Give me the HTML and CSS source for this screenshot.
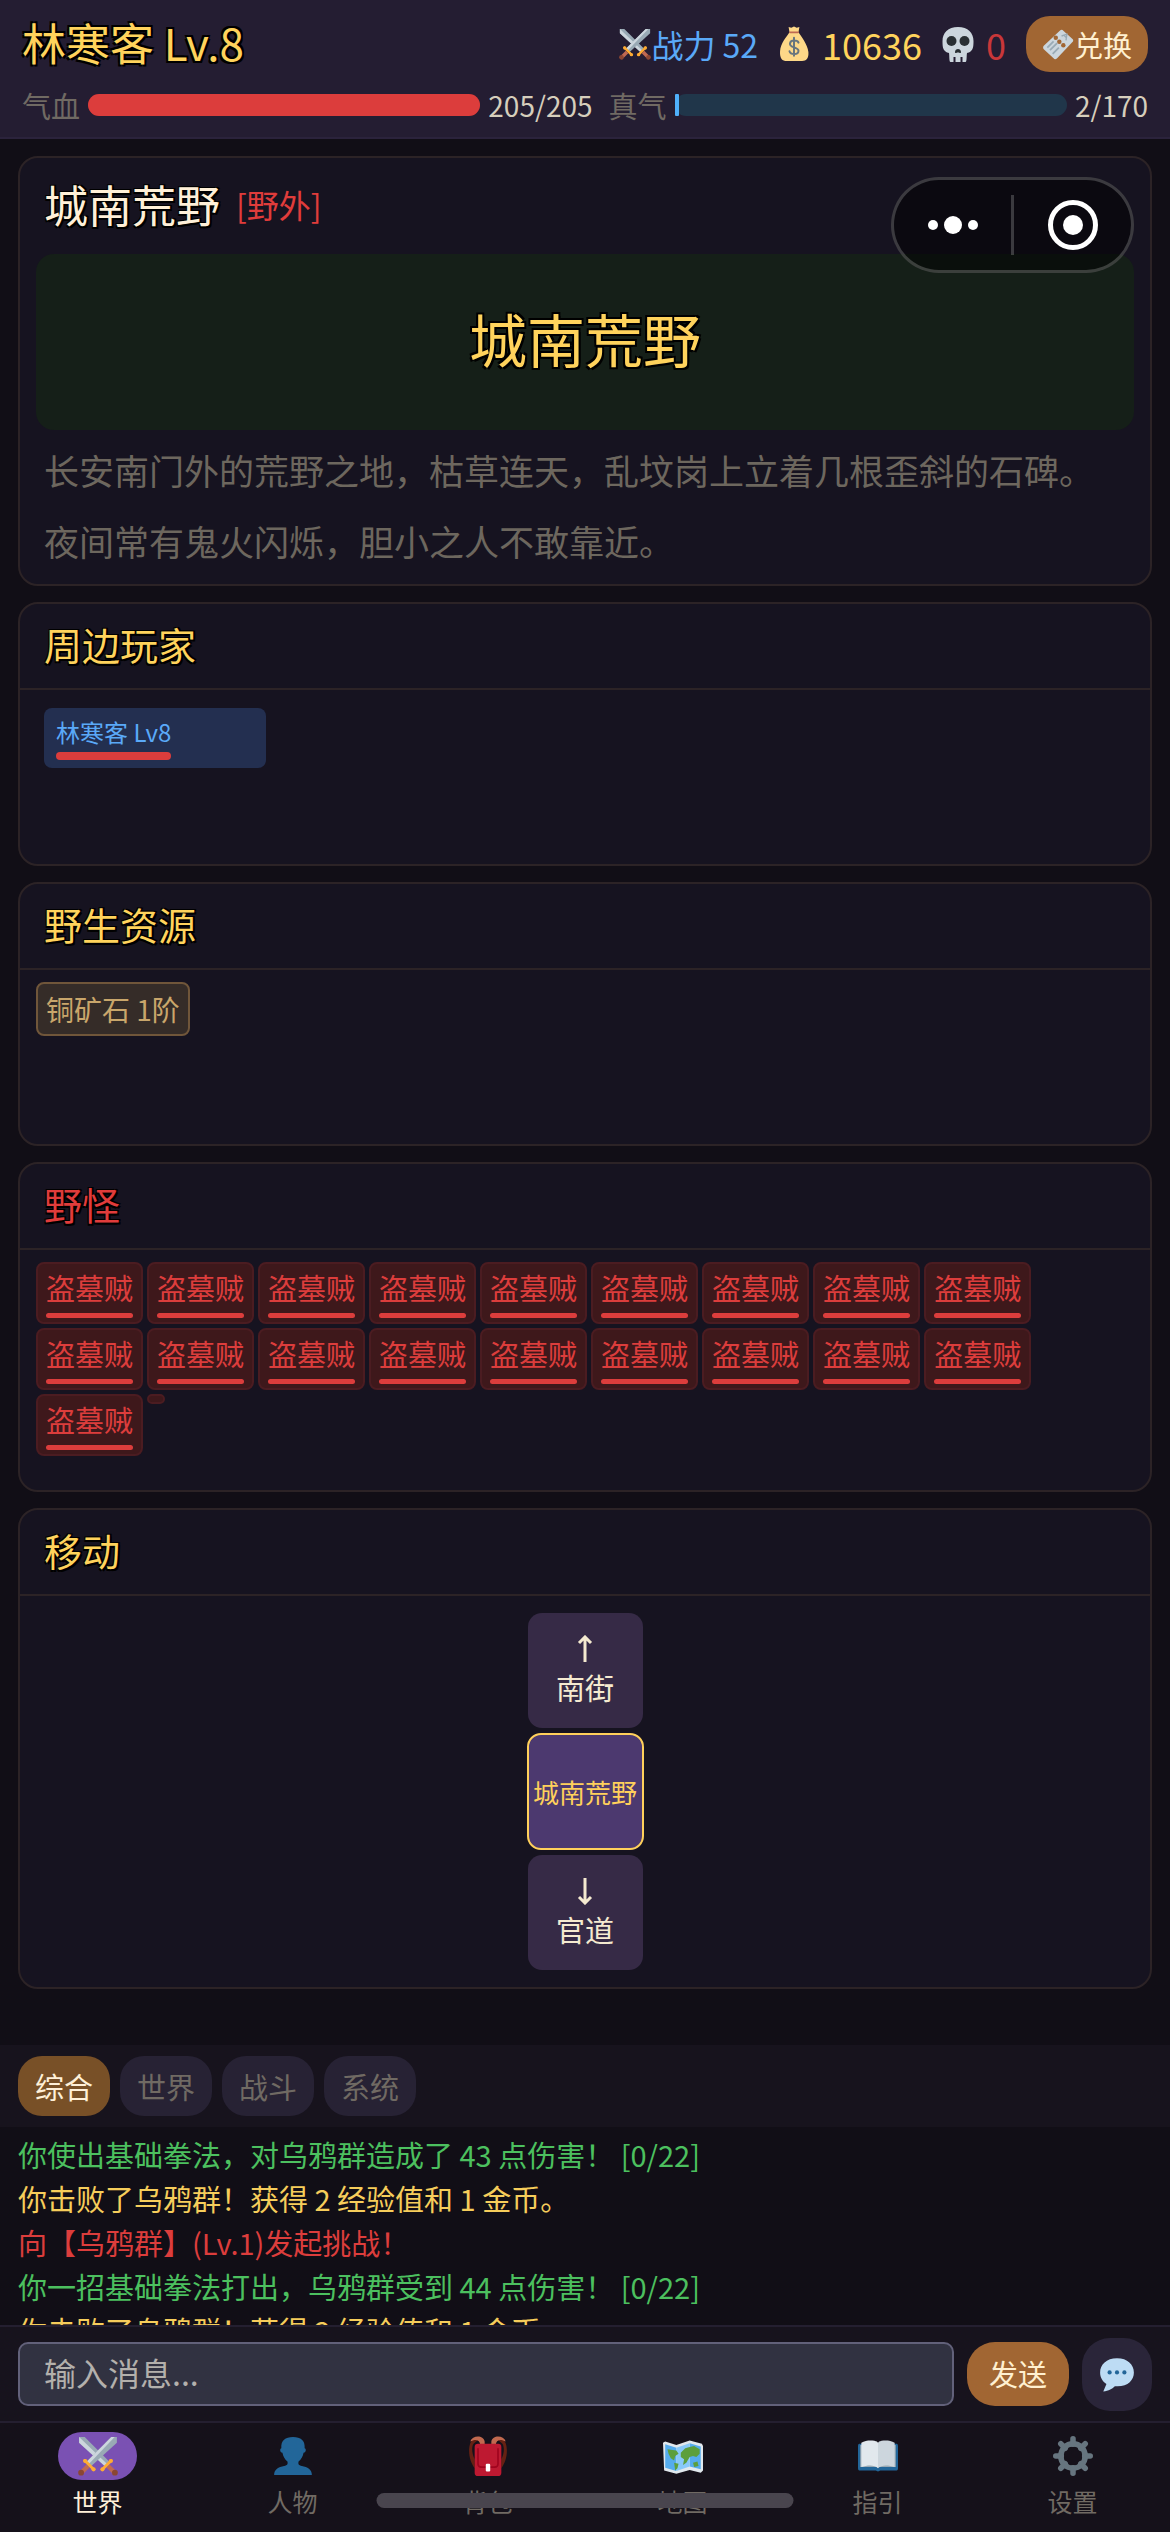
FILE: index.html
```html
<!DOCTYPE html>
<html lang="zh-CN">
<head>
    <meta charset="UTF-8">
    <meta name="viewport" content="width=device-width, initial-scale=1.0">
    <title>城南荒野</title>
    <link rel="stylesheet" href="styles.css">
</head>
<body>
    <!-- shared icons -->
    <svg class="sprite" aria-hidden="true">
        <symbol id="swords" viewBox="0 0 36 36">
            <path d="M1 1h5l22 22-4 4L1 6z" fill="#99aab5"/>
            <path d="M1 1l25 24-2 2L1 6z" fill="#ccd6dd"/>
            <path d="M35 1h-5L8 23l4 4L35 6z" fill="#99aab5"/>
            <path d="M30 1h3L10 25l-2-2z" fill="#ccd6dd"/>
            <path d="M9 27l-7 7M27 27l7 7" stroke="#bf6952" stroke-width="4"/>
            <circle cx="2.8" cy="33" r="2.6" fill="#8a4633"/>
            <circle cx="33.2" cy="33" r="2.6" fill="#8a4633"/>
            <path d="M6 22l8 8M30 22l-8 8" stroke="#ffac33" stroke-width="2.6" stroke-linecap="round"/>
            <circle cx="6.5" cy="22.5" r="1.9" fill="#ffac33"/><circle cx="14" cy="30" r="1.9" fill="#ffac33"/>
            <circle cx="29.5" cy="22.5" r="1.9" fill="#ffac33"/><circle cx="22" cy="30" r="1.9" fill="#ffac33"/>
        </symbol>
    </svg>

    <header class="topbar">
        <div class="topbar-row">
            <h1 class="player-name">林寒客 Lv.8</h1>
            <div class="currency">
                <span class="power"><svg class="icon-s"><use href="#swords"/></svg>战力 52</span>
                <span class="gold">
                    <svg class="icon-m" viewBox="0 0 32 40">
                        <path d="M10 1l3 1 3-1.500L19 2l3-1-1 6H11z" fill="#fdd888"/>
                        <path d="M11 7C8 12 1 19 .5 28 0 36 3 39 8 39h17c5 0 7.500-3 7-10C31 20 24 12 21 7z" fill="#fdd888"/>
                        <path d="M11.500 7h9" stroke="#bf6952" stroke-width="2" stroke-linecap="round"/>
                        <path d="M21 18.500C20 15.500 12 15 11.500 19.500c-.5 5 9.500 3.500 9.500 8 0 5-9 4.500-10 .5M16 13v20" fill="none" stroke="#67757f" stroke-width="2.200" stroke-linecap="round"/>
                    </svg>
                    10636
                </span>
                <span class="kills">
                    <svg class="icon-m" viewBox="0 0 32 36">
                        <path d="M16 1C6 1 .5 7 .5 15c0 6 .5 8 2.500 10 1.500 1.500 3 1.500 4 2 .5 2 0 9 1.500 9h15c1.500 0 1-7 1.500-9 1-.5 2.500-.5 4-2 2-2 2.500-4 2.500-10C31.500 7 26 1 16 1z" fill="#ccd6dd"/>
                        <circle cx="9.500" cy="15" r="5" fill="#292f33"/>
                        <circle cx="22.500" cy="15" r="5" fill="#292f33"/>
                        <path d="M13 26c0-2 1.500-3 3-3s3 1 3 3-1.500.5-3 .5-3 1.500-3-.5z" fill="#292f33"/>
                        <path d="M12.500 31v5M19.500 31v5" stroke="#241d32" stroke-width="2"/>
                    </svg>
                    0
                </span>
                <button class="redeem" type="button">
                    <svg class="icon-s" viewBox="0 0 36 36">
                        <path d="M20 3c1.500-1.500 3-1.500 4 0l10 9c1.500 1 1.500 3 0 4L17 34c-1.500 1.500-3 1.500-4 0L2 24c-1-1-1-3 0-4z" fill="#ccd6dd"/>
                        <path d="M6 22l7-7M9 25l8-8M12 29l7-7" stroke="#99aab5" stroke-width="2"/>
                        <circle cx="15.500" cy="11" r="2.500" fill="#a16633"/><circle cx="19.500" cy="15.500" r="2.500" fill="#a16633"/><circle cx="24" cy="19.500" r="2.500" fill="#a16633"/>
                        <path d="M22 9l6-2-1 7M24.500 8l3 3" stroke="#99aab5" stroke-width="1.500" fill="none"/>
                    </svg>兑换
                </button>
            </div>
        </div>
        <div class="topbar-row vitals">
            <span class="vital-label">气血</span>
            <div class="gauge gauge-hp"><div class="gauge-fill" style="width:100%"></div></div>
            <span class="vital-value">205/205</span>
            <span class="vital-label mp-label">真气</span>
            <div class="gauge gauge-mp"><div class="gauge-fill" style="width:1.18%"></div></div>
            <span class="vital-value">2/170</span>
        </div>
    </header>

    <div class="capsule">
        <button type="button" aria-label="更多">
            <svg width="60" height="60" viewBox="0 0 60 60" fill="#fff"><circle cx="10" cy="30" r="5"/><circle cx="30" cy="30" r="9"/><circle cx="50" cy="30" r="5"/></svg>
        </button>
        <span class="capsule-line"></span>
        <button type="button" aria-label="关闭">
            <svg width="60" height="60" viewBox="0 0 60 60"><circle cx="30" cy="30" r="22.500" fill="none" stroke="#fff" stroke-width="5"/><circle cx="30" cy="30" r="10" fill="#fff"/></svg>
        </button>
    </div>

    <main class="world">
        <section class="card place">
            <div class="place-head">
                <h2 class="place-name">城南荒野</h2>
                <span class="place-type">[野外]</span>
            </div>
            <div class="banner">城南荒野</div>
            <p class="place-desc">长安南门外的荒野之地，枯草连天，乱坟岗上立着几根歪斜的石碑。夜间常有鬼火闪烁，胆小之人不敢靠近。</p>
        </section>

        <section class="card">
            <h2 class="card-title">周边玩家</h2>
            <div class="card-body players">
                <div class="player">
                    <span>林寒客 Lv8</span>
                    <div class="player-hp"></div>
                </div>
            </div>
        </section>

        <section class="card">
            <h2 class="card-title">野生资源</h2>
            <div class="card-body">
                <button class="ore" type="button">铜矿石 1阶</button>
            </div>
        </section>

        <section class="card">
            <h2 class="card-title danger">野怪</h2>
            <div class="card-body mobs">
                <button class="mob" type="button">盗墓贼</button>
                <button class="mob" type="button">盗墓贼</button>
                <button class="mob" type="button">盗墓贼</button>
                <button class="mob" type="button">盗墓贼</button>
                <button class="mob" type="button">盗墓贼</button>
                <button class="mob" type="button">盗墓贼</button>
                <button class="mob" type="button">盗墓贼</button>
                <button class="mob" type="button">盗墓贼</button>
                <button class="mob" type="button">盗墓贼</button>
                <button class="mob" type="button">盗墓贼</button>
                <button class="mob" type="button">盗墓贼</button>
                <button class="mob" type="button">盗墓贼</button>
                <button class="mob" type="button">盗墓贼</button>
                <button class="mob" type="button">盗墓贼</button>
                <button class="mob" type="button">盗墓贼</button>
                <button class="mob" type="button">盗墓贼</button>
                <button class="mob" type="button">盗墓贼</button>
                <button class="mob" type="button">盗墓贼</button>
                <button class="mob" type="button">盗墓贼</button>
                <span class="mob mob-empty"></span>
            </div>
        </section>

        <section class="card">
            <h2 class="card-title">移动</h2>
            <div class="card-body moves">
                <button class="move" type="button">
                    <svg class="arrow" viewBox="0 0 28 28"><path d="M14 27V2M8 8l6-6 6 6"/></svg>
                    南街
                </button>
                <div class="move current">城南荒野</div>
                <button class="move" type="button">
                    <svg class="arrow" viewBox="0 0 28 28"><path d="M14 1v25M8 20l6 6 6-6"/></svg>
                    官道
                </button>
            </div>
        </section>
    </main>

    <section class="chat">
        <div class="tabs">
            <button class="tab active" type="button">综合</button>
            <button class="tab" type="button">世界</button>
            <button class="tab" type="button">战斗</button>
            <button class="tab" type="button">系统</button>
        </div>
        <div class="log">
            <p class="hit">你使出基础拳法，对乌鸦群造成了 43 点伤害！ [0/22]</p>
            <p class="loot">你击败了乌鸦群！获得 2 经验值和 1 金币。</p>
            <p class="fight">向【乌鸦群】(Lv.1)发起挑战！</p>
            <p class="hit">你一招基础拳法打出，乌鸦群受到 44 点伤害！ [0/22]</p>
            <p class="loot">你击败了乌鸦群！获得 2 经验值和 1 金币。</p>
        </div>
        <form class="send-row">
            <input class="message" type="text" placeholder="输入消息..." aria-label="输入消息">
            <button class="send" type="button">发送</button>
            <button class="bubble" type="button" aria-label="聊天">
                <svg class="icon-l" viewBox="0 0 36 36">
                    <path d="M18 3C8 3 2 9 2 16.500c0 5 2.500 8.500 6 11L5 34.500c5-.5 9-3 11-5 12 1 18-5.500 18-13C34 9 28 3 18 3z" fill="#bddcf4"/>
                    <circle cx="11" cy="16.500" r="2" fill="#226699"/><circle cx="18" cy="16.500" r="2" fill="#226699"/><circle cx="25" cy="16.500" r="2" fill="#226699"/>
                </svg>
            </button>
        </form>
    </section>

    <nav class="nav">
        <a class="nav-item active" href="#world">
            <span class="nav-icon"><svg class="icon-l"><use href="#swords"/></svg></span>
            世界
        </a>
        <a class="nav-item" href="#character">
            <span class="nav-icon">
                <svg class="icon-l" viewBox="0 0 36 36"><path d="M1 35c0-5 4-7 9-8 3-.6 3.500-1.500 3-4-2.500-2-4-5-4.500-8C6 15 6 11 7.500 11 7 4 11 1 18 1s11 3 10.500 10c1.500 0 1.500 4-1 4-.5 3-2 6-4.500 8-.5 2.500 0 3.400 3 4 5 1 9 3 9 8z" fill="#226699"/></svg>
            </span>
            人物
        </a>
        <a class="nav-item" href="#bag">
            <span class="nav-icon">
                <svg class="icon-l" viewBox="0 0 36 36">
                    <path d="M5 3C0 5-1 20 6 29V21C3 15 3 8 6 6l4-3zM31 3c5 2 6 17-1 26V21c3-6 3-13 0-15l-4-3z" fill="#662113"/>
                    <path d="M2 5C4-1 14-1 15 5v3h-4C11 4 7 2 2 5zM34 5C32-1 22-1 21 5v3h4c0-4 4-6 9-3z" fill="#c1694f"/>
                    <path d="M6 10c0-2 1-3 3-3h18c2 0 3 1 3 3v23c0 2-1 3-3 3H9c-2 0-3-1-3-3z" fill="#be1931"/>
                    <path d="M9 11v14c0 2 1 3 3 3h12c2 0 3-1 3-3V11" fill="none" stroke="#a0041e" stroke-width="1.500"/>
                    <rect x="16" y="25" width="4" height="7" rx="1" fill="#fff"/>
                </svg>
            </span>
            背包
        </a>
        <a class="nav-item" href="#map">
            <span class="nav-icon">
                <svg class="icon-l" viewBox="0 0 36 36">
                    <path d="M0 6l2-1 10 3 12-4 11 3 1 2v22l-2 2-10-2.500L12 34 1 31z" fill="#e1e8ed"/>
                    <path d="M2 7.500l10 3v21l-10-3zM24 6.500l10 3v20.500l-10-2.500z" fill="#55acee"/>
                    <path d="M12 10.500l12-4v21l-12 4z" fill="#88c9f9"/>
                    <path d="M4 12l8 1 2 3-3 2-1 4-3-2-2-4zM10 24l4 1-1 4-2 2zM16 15l4-4 4-1 4-1 5 3v4l-3 3-3-1-3 1-3 5-3 2 1-5-3-2zM27 24l4-1 1 4-4 1z" fill="#5c9f3c"/>
                </svg>
            </span>
            地图
        </a>
        <a class="nav-item" href="#guide">
            <span class="nav-icon">
                <svg class="icon-l" viewBox="0 0 36 36">
                    <path d="M0 9c0-2 1-2 2-2h32c1 0 2 0 2 2v20c0 2-1 2-2 2H20l-2 1-2-1H2c-1 0-2 0-2-2z" fill="#226699"/>
                    <path d="M2 8h32v20H2z" fill="#99aab5"/>
                    <path d="M3 6c5-3 12-2 14-1l1 1v23c-3-3-9-3-15-1z" fill="#e1e8ed"/>
                    <path d="M33 6c-5-3-12-2-14-1l-1 1v23c3-3 9-3 15-1z" fill="#ccd6dd"/>
                </svg>
            </span>
            指引
        </a>
        <a class="nav-item" href="#settings">
            <span class="nav-icon">
                <svg class="icon-l" viewBox="0 0 36 36">
                    <circle cx="18" cy="18" r="11" fill="none" stroke="#66757f" stroke-width="5"/>
                    <path d="M18 2.500v5M18 28.500v5M2.500 18h5M28.500 18h5M7 7l4 4M25 25l4 4M29 7l-4 4M7 29l4-4" stroke="#66757f" stroke-width="5" stroke-linecap="round"/>
                </svg>
            </span>
            设置
        </a>
        <span class="home-bar"></span>
    </nav>
</body>
</html>
```
FILE: styles.css
```css
* {
    box-sizing: border-box;
}

body {
    margin: 0;
    height: 100vh;
    display: flex;
    flex-direction: column;
    position: relative;
    overflow: hidden;
    background: #110e16;
    color: #f5ead0;
    font-family: "Noto Sans CJK SC", "Noto Sans", sans-serif;
    font-size: 29px;
    line-height: 44px;
}

h1, h2, p {
    margin: 0;
    font-weight: 400;
}

button {
    font: inherit;
    color: inherit;
    border: none;
    padding: 0;
    cursor: pointer;
}

a {
    color: inherit;
    text-decoration: none;
}

svg {
    display: block;
    flex: none;
}

.sprite {
    position: absolute;
    width: 0;
    height: 0;
}

.icon-s {
    width: 32px;
    height: 32px;
}

.icon-m {
    width: 32px;
    height: 36px;
}

.icon-l {
    width: 40px;
    height: 40px;
}

/* top bar */
.topbar {
    padding: 16px 22px 0;
    background: #241d32;
    border-bottom: 2px solid #2b233c;
}

.topbar-row {
    display: flex;
    align-items: center;
    justify-content: space-between;
}

.player-name {
    padding-bottom: 4px;
    font-size: 44px;
    line-height: 52px;
    color: #ffd35c;
    text-shadow: 2px 2px 0 #000, -2px -2px 0 #000, 2px -2px 0 #000, -2px 2px 0 #000;
}

.currency {
    display: flex;
    align-items: center;
    gap: 20px;
    font-size: 36px;
}

.currency span {
    display: flex;
    align-items: center;
    gap: 12px;
}

.currency .power {
    font-size: 32px;
    gap: 0;
    color: #5aa9f8;
}

.currency .gold {
    color: #ffd35c;
}

.currency .kills {
    color: #c93739;
}

.redeem {
    display: flex;
    align-items: center;
    height: 56px;
    padding: 0 16px;
    border-radius: 24px;
    background: #a16633;
    font-size: 29px;
    color: #fff0d0;
}

.vitals {
    height: 65px;
    gap: 8px;
}

.vital-label {
    color: #706a63;
}

.mp-label {
    margin-left: 8px;
}

.vital-value {
    font-size: 28px;
    color: #d6cebc;
}

.gauge {
    flex: 1;
    height: 22px;
    border-radius: 11px;
}

.gauge-hp {
    background: #4a1d2a;
}

.gauge-mp {
    background: #20364a;
}

.gauge-fill {
    height: 100%;
    border-radius: 11px;
    background: #dc3d3c;
}

.gauge-mp .gauge-fill {
    border-radius: 1px;
    background: #4fb0fb;
}

/* floating menu capsule */
.capsule {
    position: absolute;
    top: 177px;
    right: 36px;
    z-index: 2;
    display: flex;
    align-items: center;
    width: 243px;
    height: 96px;
    border: 3px solid rgba(255, 255, 255, 0.2);
    border-radius: 48px;
    background: rgba(0, 0, 0, 0.5);
}

.capsule button {
    flex: 1;
    display: flex;
    justify-content: center;
    background: none;
}

.capsule-line {
    width: 3px;
    height: 60px;
    background: rgba(255, 255, 255, 0.2);
}

/* cards */
.world {
    flex: 1;
    min-height: 0;
    overflow: hidden;
    display: flex;
    flex-direction: column;
    gap: 16px;
    padding: 17px 18px 0;
}

.card {
    flex: none;
    border: 2px solid #2c2326;
    border-radius: 20px;
    background: #161320;
}

.card-title {
    padding: 12px 24px 16px;
    border-bottom: 2px solid #2c2326;
    font-size: 38px;
    line-height: 56px;
    color: #ffd35c;
    text-shadow: 2px 2px 0 #000, -1px -1px 0 #000, 2px -1px 0 #000, -1px 2px 0 #000;
}

.card-title.danger {
    color: #e03c3b;
}

.card-body {
    min-height: 174px;
    padding: 12px 16px;
}

.place {
    padding: 16px 16px 8px;
}

.place-head {
    display: flex;
    align-items: center;
    gap: 16px;
    height: 80px;
    padding: 0 8px 20px;
}

.place-name {
    font-size: 44px;
    color: #fff0d8;
    text-shadow: 2px 2px 0 #000, -1px -1px 0 #000, 2px -1px 0 #000, -1px 2px 0 #000;
}

.place-type {
    font-size: 32px;
    color: #e03c3b;
}

.banner {
    padding: 40px 0 48px;
    border-radius: 18px;
    background: #151f18;
    text-align: center;
    font-size: 58px;
    line-height: 88px;
    color: #ffd35c;
    text-shadow: 2px 2px 0 #000, -2px -2px 0 #000, 2px -2px 0 #000, -2px 2px 0 #000;
}

.place-desc {
    padding: 4px 8px 0;
    font-size: 35px;
    line-height: 71px;
    color: #6d675e;
}

.players {
    padding: 18px 24px;
}

.player {
    width: 222px;
    height: 60px;
    padding: 8px 12px;
    border-radius: 8px;
    background: #232f50;
    font-size: 24px;
    line-height: 32px;
    color: #5aa9f8;
}

.player-hp {
    width: 115px;
    height: 8px;
    margin-top: 4px;
    border-radius: 4px;
    background: #dc3d3c;
}

.ore {
    height: 54px;
    padding: 0 8px;
    border: 2px solid #70563a;
    border-radius: 8px;
    background: #352c28;
    font-size: 28px;
    color: #c9a66b;
}

.mobs {
    display: flex;
    flex-wrap: wrap;
    align-items: flex-start;
    align-content: flex-start;
    gap: 4px;
    min-height: 240px;
}

.mob {
    padding: 1px 8px 4px;
    border: 2px solid #4b1c21;
    border-radius: 8px;
    background: #3e181b;
    color: #dc3d3c;
}

.mob::after {
    content: "";
    display: block;
    height: 5px;
    margin-top: 4px;
    border-radius: 3px;
    background: #dc3d3c;
}

.mob-empty {
    padding: 3px 7px;
}

.mob-empty::after {
    display: none;
}

.moves {
    display: flex;
    flex-direction: column;
    align-items: center;
    gap: 5px;
    padding: 17px 0;
}

.move {
    display: flex;
    flex-direction: column;
    align-items: center;
    justify-content: center;
    width: 115px;
    height: 115px;
    border-radius: 14px;
    background: #362a46;
    line-height: 40px;
}

.move.current {
    width: 117px;
    height: 117px;
    border: 2px solid #ffd05b;
    background: #4c396f;
    font-size: 26px;
    color: #ffd05b;
    white-space: nowrap;
}

.arrow {
    width: 28px;
    height: 28px;
    margin-bottom: 4px;
    fill: none;
    stroke: #f5ead0;
    stroke-width: 3;
}

/* chat */
.tabs {
    display: flex;
    gap: 10px;
    padding: 11px 18px;
    background: #17131d;
}

.tab {
    height: 60px;
    padding: 0 17px;
    border-radius: 24px;
    background: #272234;
    color: #706a63;
}

.tab.active {
    background: #785027;
    color: #fff0d8;
}

.log {
    height: 198px;
    padding: 5px 18px 0;
    overflow: hidden;
}

.hit {
    color: #4cc05f;
}

.loot {
    color: #f6cd5b;
}

.fight {
    color: #dc3d3c;
}

.send-row {
    display: flex;
    align-items: center;
    gap: 13px;
    height: 96px;
    padding: 0 18px;
    border-top: 2px solid #241f30;
    background: #17131d;
}

.message {
    flex: 1;
    min-width: 0;
    height: 64px;
    padding: 0 24px 4px;
    border: 2px solid #62617a;
    border-radius: 10px;
    background: #313241;
    font: inherit;
    font-size: 32px;
    color: #f5ead0;
}

.message::placeholder {
    color: #b3b0ac;
}

.send {
    height: 64px;
    padding: 0 22px 2px;
    border-radius: 28px;
    background: #a16633;
    color: #fff0d0;
}

.bubble {
    display: flex;
    align-items: center;
    justify-content: center;
    width: 70px;
    height: 73px;
    border-radius: 28px;
    background: #2a2539;
}

.bubble .icon-l {
    width: 38px;
    height: 38px;
}

/* bottom navigation */
.nav {
    position: relative;
    display: flex;
    height: 111px;
    padding-top: 9px;
    border-top: 2px solid #241f30;
    background: #15111a;
}

.nav-item {
    flex: 1;
    display: flex;
    flex-direction: column;
    align-items: center;
    font-size: 25px;
    line-height: 42px;
    color: #706a63;
}

.nav-item.active {
    color: #fff0d8;
}

.nav-icon {
    display: flex;
    align-items: center;
    justify-content: center;
    width: 79px;
    height: 48px;
    border-radius: 24px;
}

.active .nav-icon {
    background: #7a51b3;
}

.home-bar {
    position: absolute;
    left: 50%;
    bottom: 24px;
    width: 417px;
    height: 15px;
    transform: translateX(-50%);
    border-radius: 8px;
    background: #49454e;
}
```
